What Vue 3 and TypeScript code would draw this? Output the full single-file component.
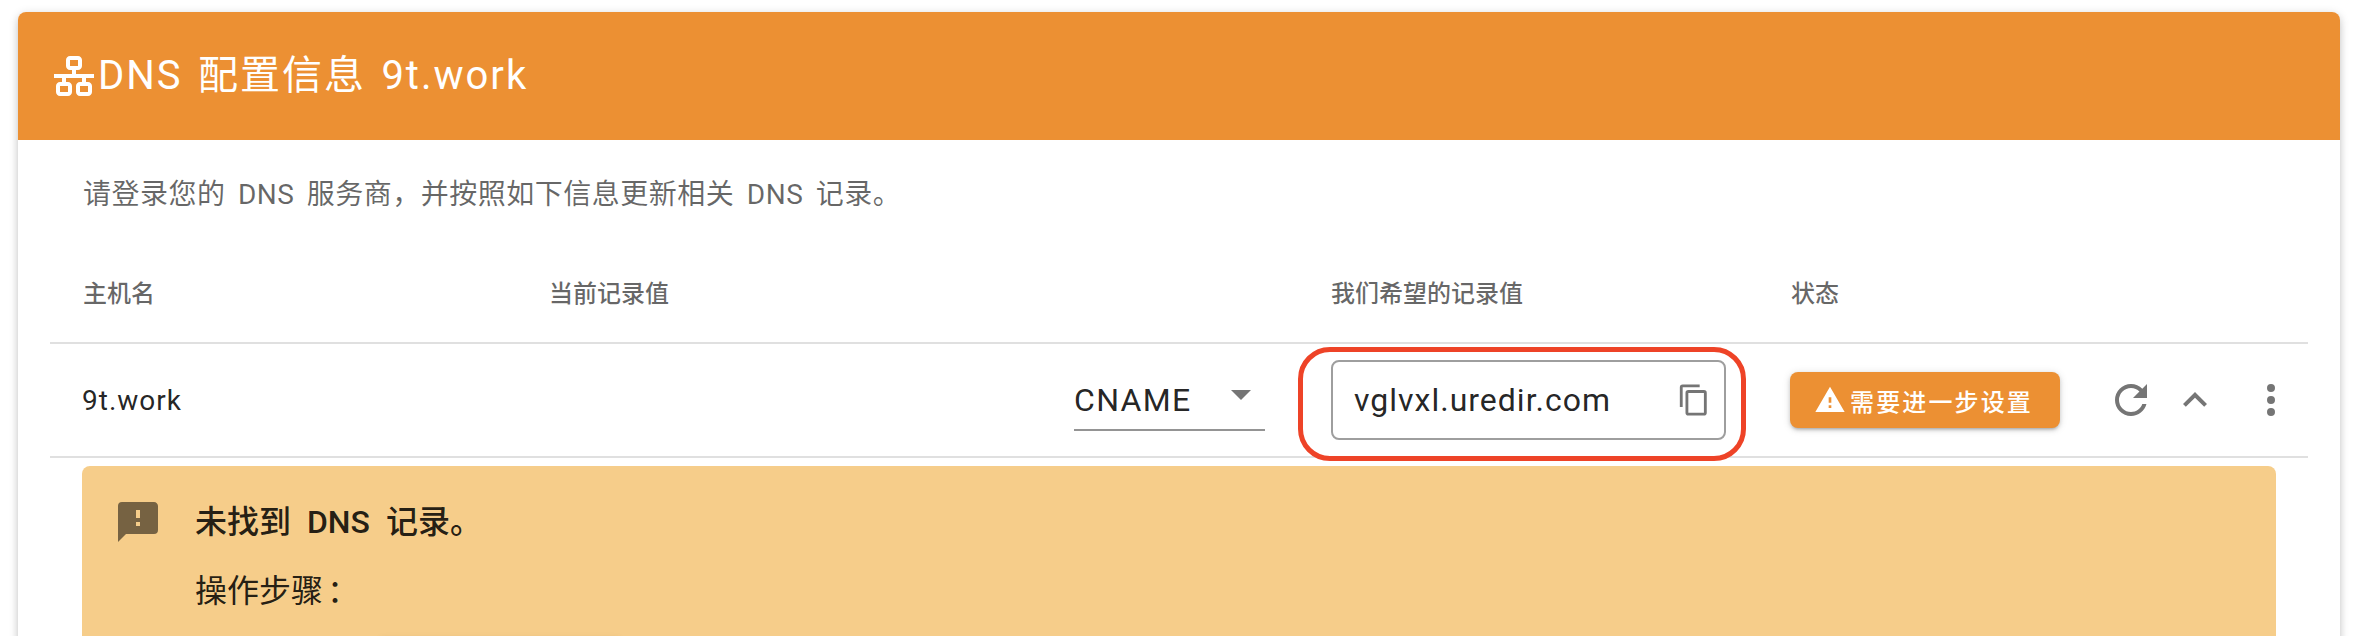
<script setup lang="ts">
const mdi = {
  lan: 'M10,2C8.89,2 8,2.89 8,4V7C8,8.11 8.89,9 10,9H11V11H2V13H6V15H5C3.89,15 3,15.89 3,17V20C3,21.11 3.89,22 5,22H9C10.11,22 11,21.11 11,20V17C11,15.89 10.11,15 9,15H8V13H16V15H15C13.89,15 13,15.89 13,17V20C13,21.11 13.89,22 15,22H19C20.11,22 21,21.11 21,20V17C21,15.89 20.11,15 19,15H18V13H22V11H13V9H14C15.11,9 16,8.11 16,7V4C16,2.89 15.11,2 14,2H10M10,4H14V7H10V4M5,17H9V20H5V17M15,17H19V20H15V17Z',
  copy: 'M19,21H8V7H19M19,5H8A2,2 0 0,0 6,7V21A2,2 0 0,0 8,23H19A2,2 0 0,0 21,21V7A2,2 0 0,0 19,5M16,1H4A2,2 0 0,0 2,3V17H4V3H16V1Z',
  alert: 'M13,14H11V10H13M13,18H11V16H13M1,21H23L12,2L1,21Z',
  refresh: 'M17.65,6.35C16.2,4.9 14.21,4 12,4A8,8 0 0,0 4,12A8,8 0 0,0 12,20C15.73,20 18.84,17.45 19.73,14H17.65C16.83,16.33 14.61,18 12,18A6,6 0 0,1 6,12A6,6 0 0,1 12,6C13.66,6 15.14,6.69 16.22,7.78L13,11H20V4L17.65,6.35Z',
  chevronUp: 'M7.41,15.41L12,10.83L16.59,15.41L18,14L12,8L6,14L7.41,15.41Z',
  dots: 'M12,16A2,2 0 0,1 14,18A2,2 0 0,1 12,20A2,2 0 0,1 10,18A2,2 0 0,1 12,16M12,10A2,2 0 0,1 14,12A2,2 0 0,1 12,14A2,2 0 0,1 10,12A2,2 0 0,1 12,10M12,4A2,2 0 0,1 14,6A2,2 0 0,1 12,8A2,2 0 0,1 10,6A2,2 0 0,1 12,4Z',
  messageAlert: 'M13,10H11V6H13M13,14H11V12H13M20,2H4A2,2 0 0,0 2,4V22L6,18H20A2,2 0 0,0 22,16V4C22,2.89 21.1,2 20,2Z',
}
</script>

<template>
  <div class="page">
    <div class="card">
      <div class="card-title">
        <svg class="title-icon" viewBox="0 0 24 24"><path :d="mdi.lan" /></svg>
        <span>DNS 配置信息 9t.work</span>
      </div>

      <div class="card-body">
        <p class="intro">请登录您的 DNS 服务商，并按照如下信息更新相关 DNS 记录。</p>

        <div class="table-row table-head">
          <div class="cell">主机名</div>
          <div class="cell">当前记录值</div>
          <div class="cell wanted-head">我们希望的记录值</div>
          <div class="cell">状态</div>
        </div>

        <div class="table-row table-data">
          <div class="cell host">9t.work</div>
          <div class="cell current">
            <div class="select">
              <span>CNAME</span>
              <span class="select-arrow"></span>
            </div>
          </div>
          <div class="cell wanted">
            <div class="field">
              <span>vglvxl.uredir.com</span>
              <svg class="copy-icon" viewBox="0 0 24 24"><path :d="mdi.copy" /></svg>
            </div>
            <div class="highlight"></div>
          </div>
          <div class="cell status">
            <button class="status-btn">
              <svg class="btn-icon" viewBox="0 0 24 24"><path :d="mdi.alert" /></svg>
              <span>需要进一步设置</span>
            </button>
            <div class="actions">
              <svg class="action" viewBox="0 0 24 24"><path :d="mdi.refresh" /></svg>
              <svg class="action" viewBox="0 0 24 24"><path :d="mdi.chevronUp" /></svg>
              <svg class="action action-more" viewBox="0 0 24 24"><path :d="mdi.dots" /></svg>
            </div>
          </div>
        </div>

        <div class="notice">
          <svg class="notice-icon" viewBox="0 0 24 24"><path :d="mdi.messageAlert" /></svg>
          <div class="notice-text">
            <div class="notice-title">未找到 DNS 记录。</div>
            <div class="notice-sub">操作步骤<span class="colon">：</span></div>
            <div class="notice-step"></div>
          </div>
        </div>
      </div>
    </div>
  </div>
</template>

<style>
html, body {
  height: 636px;
  overflow: hidden;
  background: #fff;
}
</style>

<style scoped>
.page {
  height: 636px;
  overflow: hidden;
  padding: 12px 18px 0;
  box-sizing: border-box;
  font-family: Roboto, "Noto Sans CJK SC", sans-serif;
}
.card {
  height: 700px;
  background: #fff;
  border-radius: 8px;
  box-shadow: 0 4px 8px -2px rgba(0, 0, 0, 0.2), 0 2px 10px 1px rgba(0, 0, 0, 0.12);
  overflow: hidden;
}
.card-title {
  height: 128px;
  background: #ec9033;
  color: #fff;
  display: flex;
  align-items: flex-start;
  gap: 0;
  padding: 40px 0 0 32px;
  box-sizing: border-box;
  font-size: 40px;
  line-height: 48px;
  font-weight: 400;
  letter-spacing: 2px;
  word-spacing: 3.5px;
}
.title-icon {
  width: 48px;
  height: 48px;
  flex: none;
  fill: #fff;
}
.card-body {
  padding: 0 32px;
}
.intro {
  margin: 0;
  padding: 28px 0 0 33px;
  height: 126px;
  box-sizing: border-box;
  font-size: 28px;
  line-height: 54px;
  letter-spacing: 0.5px;
  word-spacing: 5px;
  color: rgba(0, 0, 0, 0.6);
}
.table-row {
  display: grid;
  grid-template-columns: 466px 783px 459px 550px;
}
.cell {
  padding-left: 33px;
  box-sizing: border-box;
}
.table-head {
  height: 72px;
  padding-top: 4px;
  border-bottom: 2px solid #e0e0e0;
  font-size: 24px;
  line-height: 48px;
  font-weight: 500;
  color: rgba(0, 0, 0, 0.6);
}
.wanted-head {
  padding-left: 32px;
}
.table-data {
  height: 112px;
  border-bottom: 2px solid #e0e0e0;
  align-items: center;
  color: rgba(0, 0, 0, 0.87);
}
.host {
  font-size: 28px;
  letter-spacing: 1px;
  padding-left: 32px;
}
.current {
  display: flex;
  justify-content: flex-end;
  padding-right: 34px;
}
.select {
  width: 191px;
  height: 56px;
  margin-top: 4px;
  border-bottom: 2px solid #949494;
  display: flex;
  justify-content: space-between;
  font-size: 32px;
  line-height: 54px;
  letter-spacing: 1.3px;
  position: relative;
}
.select-arrow {
  position: absolute;
  right: 14px;
  top: 17px;
  width: 0;
  height: 0;
  border-left: 10px solid transparent;
  border-right: 10px solid transparent;
  border-top: 10px solid #757575;
}
.wanted {
  position: relative;
  height: 100%;
  display: flex;
  align-items: center;
  padding-left: 32px;
}
.field {
  width: 395px;
  height: 80px;
  border: 2px solid #9e9e9e;
  border-radius: 8px;
  box-sizing: border-box;
  display: flex;
  align-items: center;
  justify-content: space-between;
  padding: 0 13px 0 21px;
  font-size: 32px;
  letter-spacing: 1px;
}
.copy-icon {
  width: 34px;
  height: 34px;
  fill: #757575;
}
.highlight {
  position: absolute;
  left: -1px;
  top: 3px;
  width: 448px;
  height: 114px;
  border: 5px solid #ee4327;
  border-radius: 32px;
  box-sizing: border-box;
}
.status {
  display: flex;
  align-items: center;
  padding-left: 32px;
}
.status-btn {
  width: 270px;
  height: 56px;
  border: none;
  border-radius: 8px;
  background: #ec9033;
  color: #fff;
  display: flex;
  align-items: center;
  justify-content: flex-start;
  padding: 0 0 0 24px;
  font-family: inherit;
  font-size: 24px;
  font-weight: 500;
  letter-spacing: 2.14px;
  box-shadow: 0 3px 3px -2px rgba(0, 0, 0, 0.2), 0 2px 4px 0 rgba(0, 0, 0, 0.14), 0 1px 8px 0 rgba(0, 0, 0, 0.12);
}
.btn-icon {
  width: 32px;
  height: 32px;
  fill: #fff;
  margin-right: 4px;
  flex: none;
}
.actions {
  display: flex;
  align-items: center;
  gap: 16px;
  margin-left: 47px;
}
.action {
  width: 48px;
  height: 48px;
  fill: #757575;
  flex: none;
}
.action-more {
  margin-left: 12px;
}
.notice {
  margin: 8px 32px 0;
  height: 300px;
  background: #f6cd8a;
  border-radius: 8px;
  display: flex;
  padding: 32px 0 0 32px;
  box-sizing: border-box;
  color: rgba(0, 0, 0, 0.87);
}
.notice-icon {
  width: 48px;
  height: 48px;
  flex: none;
  fill: rgba(0, 0, 0, 0.52);
}
.notice-title {
  margin-left: 33px;
  font-size: 32px;
  line-height: 48px;
  font-weight: 500;
  word-spacing: 8px;
}
.notice-sub {
  margin: 21px 0 0 33px;
  font-size: 32px;
  line-height: 48px;
}
.colon {
  margin-left: 4px;
}
.notice-step {
  width: 240px;
  height: 56px;
  margin: 24px 0 0 218px;
  box-shadow: 0 1px 8px 0 rgba(0, 0, 0, 0.12);
}
</style>
